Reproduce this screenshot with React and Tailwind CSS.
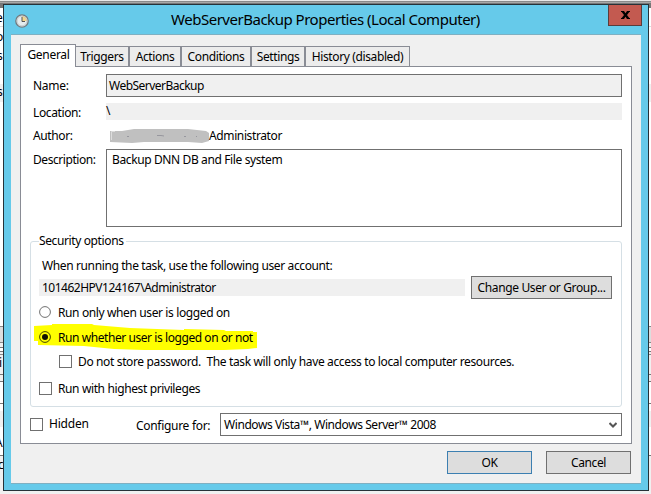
import React from "react";

const tabs = [
  { name: "Triggers", cls: "w-[53px] border-l-0" },
  { name: "Actions", cls: "w-[52px]" },
  { name: "Conditions", cls: "w-[70px]" },
  { name: "Settings", cls: "w-[54px]" },
  { name: "History (disabled)", cls: "w-[105px]" },
];

function Box() {
  return <span className="h-[13px] w-[13px] shrink-0 border border-[#707070] bg-white" />;
}

function Radio({ checked }) {
  return (
    <svg className="h-[12px] w-[12px] shrink-0" viewBox="0 0 12 12">
      <circle cx="6" cy="6" r="5.4" fill={checked ? "#ffff00" : "#fff"} stroke={checked ? "#444400" : "#707070"} />
      {checked && <circle cx="6" cy="6" r="3" fill="#111100" />}
    </svg>
  );
}

function Clock() {
  return (
    <svg className="h-[14px] w-[14px]" viewBox="0 0 14 14">
      <circle cx="7" cy="7" r="6.2" fill="#e6ecee" stroke="#70787c" strokeWidth="1.3" />
      <path d="M7 7V2A5 5 0 0 1 12 7Z" fill="#f3d58b" />
      <circle cx="7" cy="7" r="4.9" fill="none" stroke="#b4bbbe" strokeWidth=".7" />
      <path d="M7 3V7.5H10" fill="none" stroke="#555" strokeWidth="1" />
    </svg>
  );
}

// Slivers of the window behind the dialog, visible along its edges.
function Backdrop() {
  return (
    <div className="flex h-full flex-col *:shrink-0 *:overflow-hidden">
      <div className="h-px bg-[#e8e8e8]" />
      <div className="h-px bg-[#8a8a8a]" />
      <div className="h-px bg-[#a8a8a8]" />
      <div className="h-[5px] bg-[#777]" />
      <div className="h-[18px] bg-white pt-[2px]"><span className="-ml-[4px]">e</span></div>
      <div className="h-px bg-[#ddd]" />
      <div className="flex h-[57px] flex-col gap-[3px] bg-white pt-[2px]"><span className="-ml-[4px]">o</span><span className="-ml-[3px]">s</span></div>
      <div className="h-[18px] bg-[#efefef]"><span className="-ml-[3px]">s</span></div>
      <div className="h-[224px] bg-white" />
      <div className="h-[17px] border-y border-[#888] bg-[#ddd]" />
      <div className="h-[4px] bg-[#f0f0f0]" />
      <div className="h-[5px] border-y border-[#777] bg-white" />
      <div className="h-[3px] border-b border-[#888] bg-[#f0f0f0]" />
      <div className="h-[19px] bg-[#f0f0f0]"><span className="-ml-px">i</span></div>
      <div className="h-[8px] border-y border-[#777] bg-[#f0f0f0]" />
      <div className="h-[22px] border-b border-[#777] bg-white" />
      <div className="h-[7px] bg-white" />
      <div className="h-[16px] bg-[#f0f0f0]" />
      <div className="h-[29px] border-b border-[#777] bg-white pt-[8px]"><span className="-ml-[5px]">A</span></div>
      <div className="flex-1 bg-[#f0f0f0] pt-px"><span className="-ml-[2px]">c</span></div>
    </div>
  );
}

export default function App() {
  return (
    <div className="relative h-[494px] w-[651px] overflow-hidden whitespace-pre bg-[#f0f0f0] font-['Noto_Sans','Open_Sans',sans-serif] text-[12px] leading-4 tracking-[-0.38px] text-black">
      <Backdrop />
      <div className="absolute left-[3px] top-[4px] flex h-[487px] w-[646px] flex-col border border-[#263238] bg-[#66caea] px-[7px] pb-[6px]">
        <div className="flex h-[29px] shrink-0 items-start">
          <div className="pl-[4px] pt-[9px]"><Clock /></div>
          <div className="ml-[142px] w-[438px] pt-[4px] text-[15px] leading-5 tracking-[-0.48px]"><span>WebServerBackup Properties (Local Computer)</span></div>
          <div className="-mr-[1px] flex h-[21px] w-[34px] shrink-0 items-center justify-center border border-t-0 border-[#5b3c3a] bg-[#c35a50]">
            <svg className="h-[8px] w-[9px]" viewBox="0 0 9 8"><path d="M0 0H3L4.5 2.3 6 0H9V1H8.3L6 4 8.3 7H9V8H6L4.5 5.7 3 8H0V7H.7L3 4 .7 1H0Z" fill="#000" /></svg>
          </div>
        </div>
        <div className="flex flex-1 flex-col border-y border-[#7fb0c2] bg-[#f0f0f0] pl-[9px] pr-[9px] pt-[9px]">
          <div className="flex h-[22px] shrink-0 items-end">
            <div className="z-10 -mb-px flex h-[23px] w-[56px] justify-center border border-b-0 border-[#898c95] bg-white pl-px pt-[2px] tracking-[-0.3px]"><span>General</span></div>
            {tabs.map((t) => (
              <div key={t.name} className={`${t.cls} flex h-[20px] justify-center border border-b-0 border-[#898c95] bg-[#ececec] pt-[2px]`}><span>{t.name}</span></div>
            ))}
          </div>
          <div className="flex h-[378px] w-[612px] shrink-0 flex-col border border-[#898c95] bg-white pl-[9px] pr-[9px] pt-[7px]">
            <div className="flex h-[23px] items-center pl-[3px]">
              <span className="w-[73px] tracking-[-0.3px]"><span>Name:</span></span>
              <div className="flex h-[23px] w-[516px] items-center border border-[#707070] bg-[#f0f0f0] pl-[2px] tracking-[-0.53px]"><span>WebServerBackup</span></div>
            </div>
            <div className="mt-[6px] flex h-[17px] items-center pl-[3px]">
              <span className="w-[73px] pt-[2px]"><span>Location:</span></span>
              <div className="h-[17px] w-[516px] bg-[#f0f0f0]">\</div>
            </div>
            <div className="mt-[8px] flex h-[16px] items-center pl-[3px]">
              <span className="w-[77px]"><span>Author:</span></span>
              <svg className="h-[16px] w-[99px]" viewBox="0 0 99 16">
                <path d="M0 3H12L24 1H78L96 3L99 5V13L92 15L78 14H34L22 15L0 14Z" fill="#c0c0c0" />
                <path d="M5 3.5H1.5V12" fill="none" stroke="#e4e4e4" strokeWidth=".8" />
                <path d="M17 8.5H19M47 7.5H51L54 8M74 8.5H76M86 8.5H87" fill="none" stroke="#8d8d96" strokeWidth=".8" />
              </svg>
              <span>Administrator</span>
            </div>
            <div className="mt-[5px] flex h-[78px] pl-[3px]">
              <span className="w-[73px] pt-[3px] tracking-[-0.44px]"><span>Description:</span></span>
              <div className="h-[78px] w-[516px] border border-[#707070] bg-white pl-[5px] pt-[2px]"><span>Backup DNN DB and File system</span></div>
            </div>
            <div className="mt-[14px] flex h-[166px] w-[592px] shrink-0 flex-col rounded-[3px] border border-[#d5dfe5] pl-[8px]">
              <div className="-mt-[9px] flex h-[16px]"><span className="bg-white pr-[2px]"><span>Security options</span></span></div>
              <div className="mt-[9px] h-[16px] pl-[3px]"><span>When running the task, use the following user account:</span></div>
              <div className="mt-[2px] flex h-[23px] items-center">
                <div className="h-[17px] w-[426px] bg-[#f0f0f0] pl-[3px] pt-px tracking-[-0.5px]"><span>101462HPV124167\Administrator</span></div>
                <button className="ml-[6px] flex h-[23px] w-[141px] items-center justify-center border border-[#707070] bg-[#ddd]"><span className="tracking-[-0.36px]">Change User or Group...</span></button>
              </div>
              <div className="mt-[5px] flex h-[16px] items-center gap-[7px]"><Radio /><span className="pt-[2px]">Run only when user is logged on</span></div>
              <div className="relative mt-[9px] flex h-[16px] items-center gap-[7px]">
                <svg className="absolute -left-[5px] -top-[6px] h-[30px] w-[224px]" viewBox="0 0 224 30">
                  <path d="M0 3 18 2V1H58L60 2 96 5 150 7V6L190 7 192 8 219 8V9H223V25L214 26 190 27H110L80 26 50 23 4 22V18H0Z" fill="#ffff00" />
                </svg>
                <span className="relative flex items-center gap-[7px] tracking-[-0.43px]"><Radio checked /><span className="pt-[2px]">Run whether user is logged on or not</span></span>
              </div>
              <div className="mt-[9px] flex h-[15px] items-center gap-[6px] pl-[20px] tracking-[-0.36px]"><Box /><span>Do not store password.  The task will only have access to local computer resources.</span></div>
              <div className="mt-[12px] flex h-[15px] items-center gap-[6px]"><Box /><span>Run with highest privileges</span></div>
            </div>
            <div className="mt-[6px] flex h-[23px] items-center">
              <span className="flex w-[106px] items-center gap-[6px] pb-px"><Box /><span className="tracking-[-0.2px]">Hidden</span></span>
              <span className="w-[84px] pt-[2px] tracking-[-0.3px]"><span>Configure for:</span></span>
              <div className="flex h-[23px] w-[402px] items-center justify-between border border-[#707070] bg-white pl-[3px] pr-[4px] tracking-[-0.43px]">
                <span>Windows Vista™, Windows Server™ 2008</span>
                <svg className="h-[6px] w-[8px]" viewBox="0 0 8 6"><path d="M.5 1 4 4.5 7.5 1" fill="none" stroke="#555" strokeWidth="2" /></svg>
              </div>
            </div>
          </div>
          <div className="mt-[7px] flex justify-end gap-[14px] pr-px">
            <button className="flex h-[23px] w-[85px] items-center justify-center border border-[#3c7fb1] bg-[#ddd]"><span>OK</span></button>
            <button className="flex h-[23px] w-[85px] items-center justify-center border border-[#707070] bg-[#ddd]"><span>Cancel</span></button>
          </div>
        </div>
      </div>
    </div>
  );
}
